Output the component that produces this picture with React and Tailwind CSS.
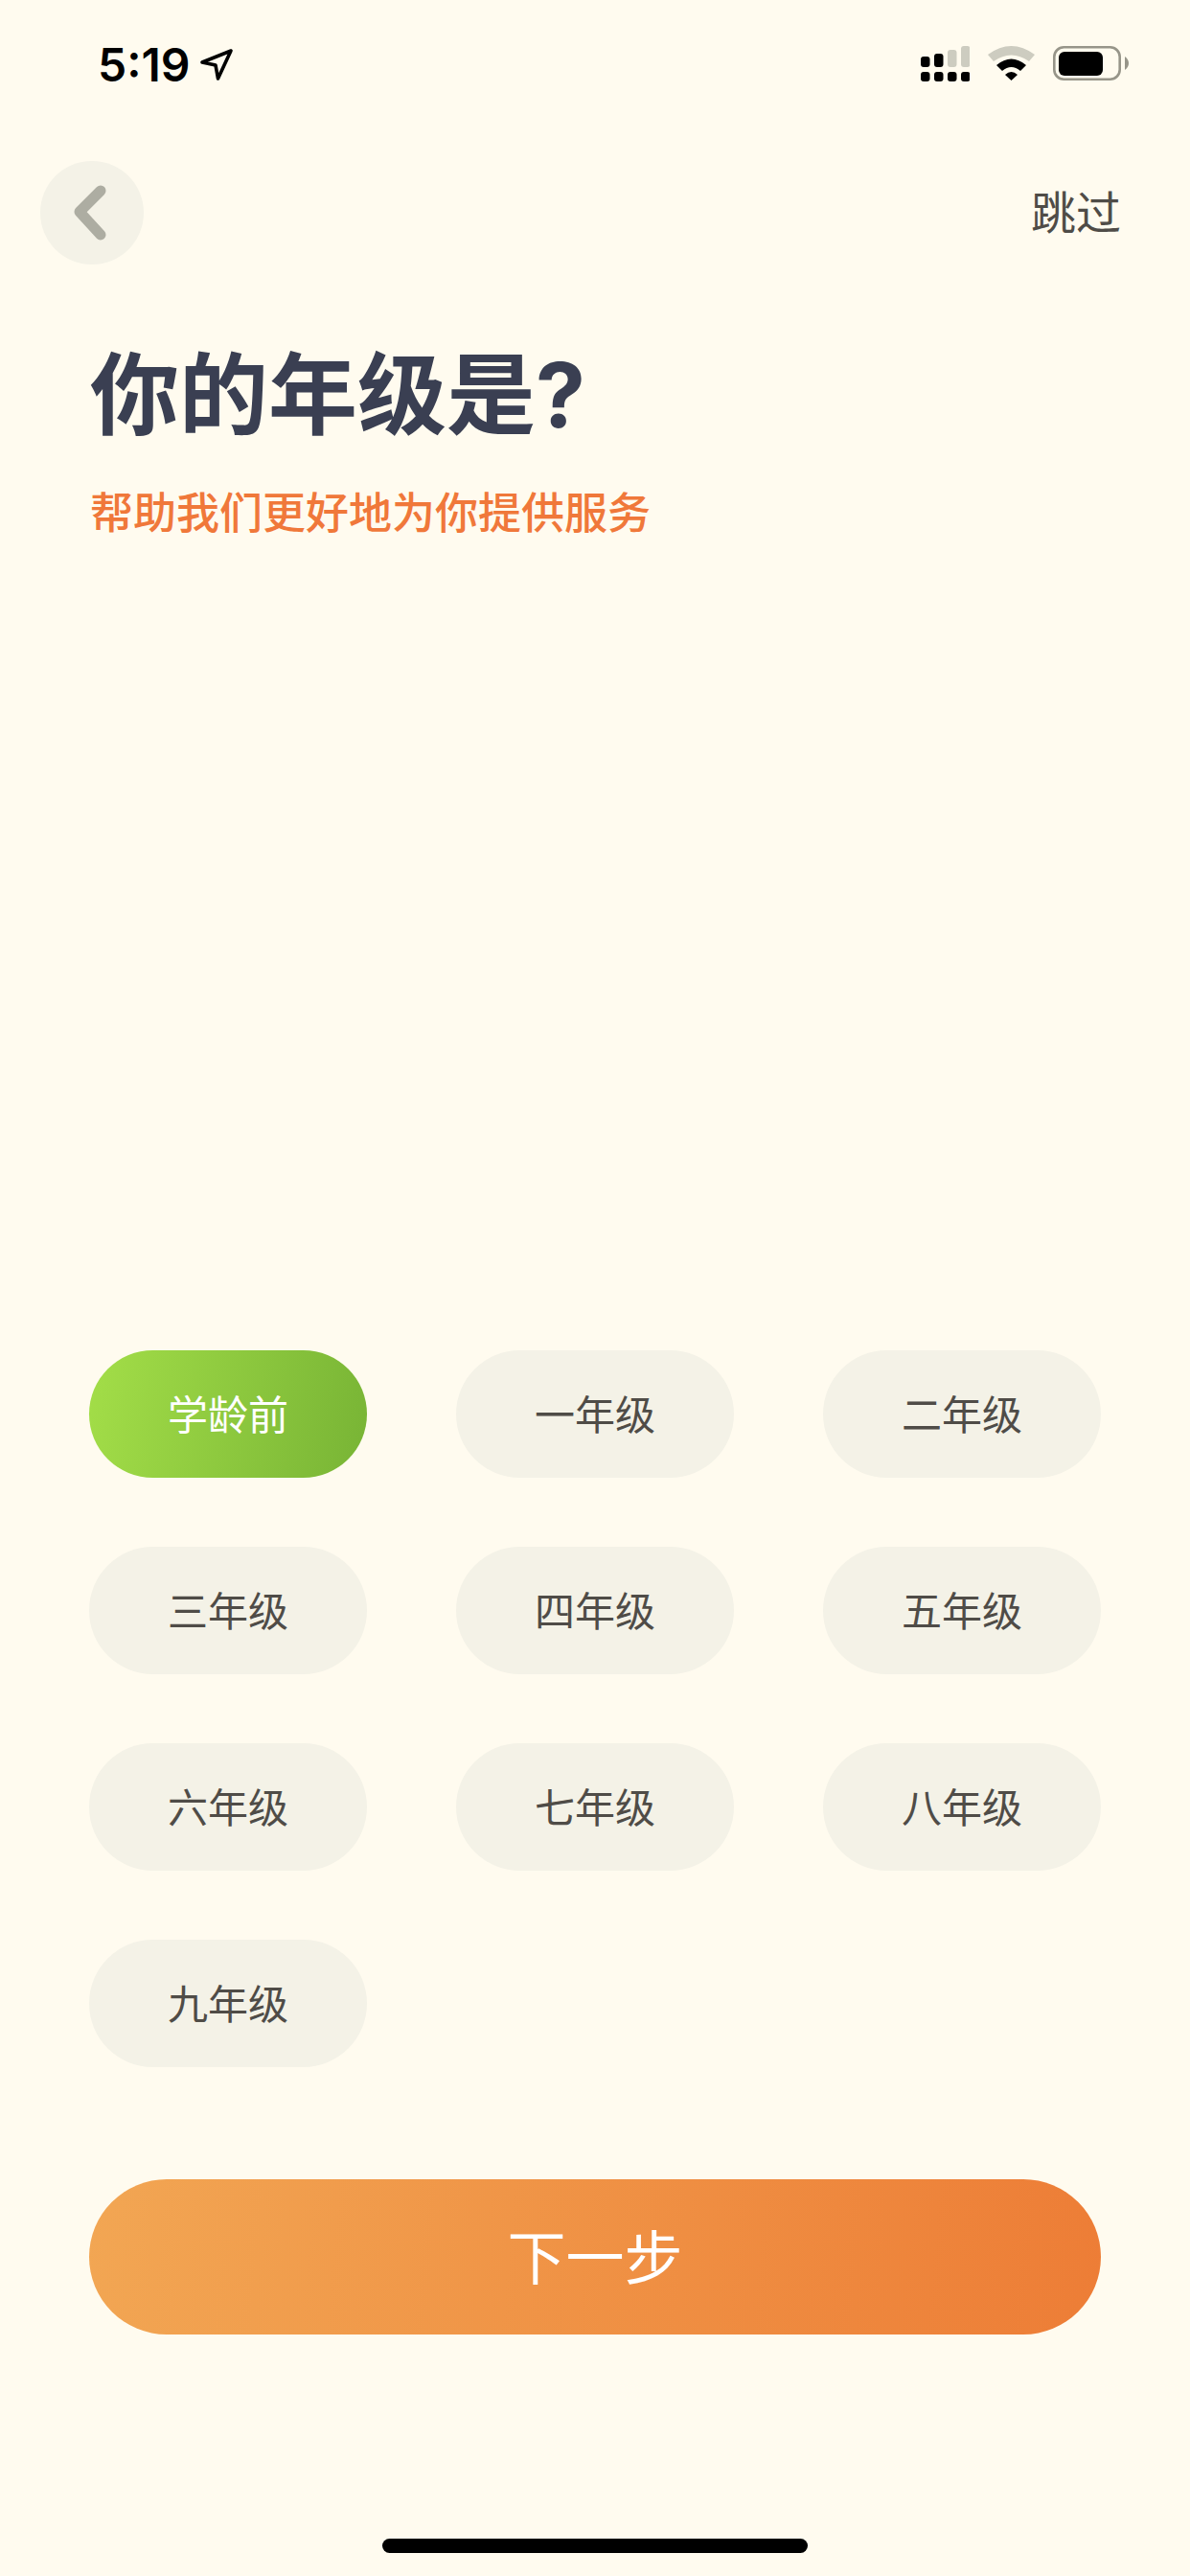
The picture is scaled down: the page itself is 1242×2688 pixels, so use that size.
const grades = ['学龄前', '一年级', '二年级', '三年级', '四年级', '五年级', '六年级', '七年级', '八年级', '九年级']

function StatusBar() {
  return (
    <div className="h-[168px] flex justify-between items-start pl-[102px] pr-[64px] pt-[48px]">
      <div className="flex items-center gap-[9px]">
        <span className="text-[48px] leading-[40px] font-semibold text-black font-['Inter',sans-serif]">5:19</span>
        <svg width="36" height="36" viewBox="0 0 36 36" fill="none" stroke="#000" strokeWidth="3.6" strokeLinejoin="round">
          <path d="M33 3 L3 15 L17 18 L19.500 32 Z" />
        </svg>
      </div>
      <div className="flex items-start gap-[19px]">
        <svg width="51" height="37" viewBox="0 0 51 37">
          <g fill="#000">
            <rect x="0" y="11" width="9.500" height="11" rx="3" />
            <rect x="14" y="8" width="9.500" height="14" rx="3" />
            <rect x="0" y="27" width="9.500" height="10" rx="3" />
            <rect x="14" y="27" width="9.500" height="10" rx="3" />
            <rect x="28" y="27" width="9.500" height="10" rx="3" />
            <rect x="42" y="27" width="9.500" height="10" rx="3" />
          </g>
          <g fill="#cdccc0">
            <rect x="28" y="4" width="9.500" height="18" rx="3" />
            <rect x="42" y="0" width="9.500" height="22" rx="3" />
          </g>
        </svg>
        <svg width="49" height="36" viewBox="0 0 49 36">
          <path d="M0 9 Q24.500 -9 49 9 L43 16 Q24.500 3 6 16 Z" fill="#cdccc0" />
          <path d="M9 20 Q24.500 7 40 20 L34 26 Q24.500 18 15 26 Z" fill="#000" />
          <path d="M18 30 Q24.500 24 31 30 L24.500 36 Z" fill="#000" />
        </svg>
        <svg width="79" height="36" viewBox="0 0 79 36">
          <rect x="1.300" y="1.300" width="68.400" height="33.400" rx="10" fill="none" stroke="#979589" strokeWidth="2.600" />
          <rect x="6" y="6" width="46" height="25" rx="6" fill="#000" />
          <path d="M75 11 Q79 14 79 18 Q79 22 75 25 Z" fill="#979589" />
        </svg>
      </div>
    </div>
  )
}

export default function App() {
  return (
    <div className="w-[1242px] h-[2688px] bg-[#fffbef] flex flex-col font-['Noto_Sans_CJK_SC','Noto_Sans',sans-serif]">
      <StatusBar />

      <div className="flex items-center justify-between pl-[42px] pr-[72px]">
        <button className="w-[108px] h-[108px] rounded-full bg-[#f4f2e7] flex items-center justify-center pr-[4px]">
          <svg width="36" height="60" viewBox="0 0 36 60" fill="none" stroke="#adada2" strokeWidth="11" strokeLinecap="round" strokeLinejoin="round">
            <path d="M29 7 L7 29 L29 53" />
          </svg>
        </button>
        <span className="text-[47px] leading-[60px] pb-[6px] text-[#4f4c47]">跳过</span>
      </div>

      <div className="pl-[94px] mt-[76px]">
        <h1 className="text-[93px] leading-[120px] font-bold text-[#3a3f52] font-['Inter','Noto_Sans_CJK_SC',sans-serif]">你的年级是?</h1>
        <p className="mt-[31px] text-[45px] leading-[60px] font-medium text-[#f0783a]">帮助我们更好地为你提供服务</p>
      </div>

      <div className="mt-auto px-[93px]">
        <div className="grid grid-cols-3 gap-x-[93px] gap-y-[72px]">
          {grades.map((g, i) => (
            <div
              key={g}
              className={i === 0
                ? 'h-[133px] rounded-[67px] pb-[5px] flex items-center justify-center text-[42px] text-white bg-[linear-gradient(100deg,#a3de48,#78b435)]'
                : 'h-[133px] rounded-[67px] pb-[5px] flex items-center justify-center text-[42px] text-[#4f4c47] bg-[#f4f2e7]'}
            >
              {g}
            </div>
          ))}
        </div>

        <button className="mt-[117px] w-full h-[162px] rounded-[81px] pb-[4px] text-[61px] text-white bg-[linear-gradient(95deg,#f2a653,#ed7d36)]">
          下一步
        </button>
      </div>

      <div className="flex justify-center mt-[213px] mb-[24px]">
        <div className="w-[444px] h-[15px] rounded-full bg-black" />
      </div>
    </div>
  )
}
